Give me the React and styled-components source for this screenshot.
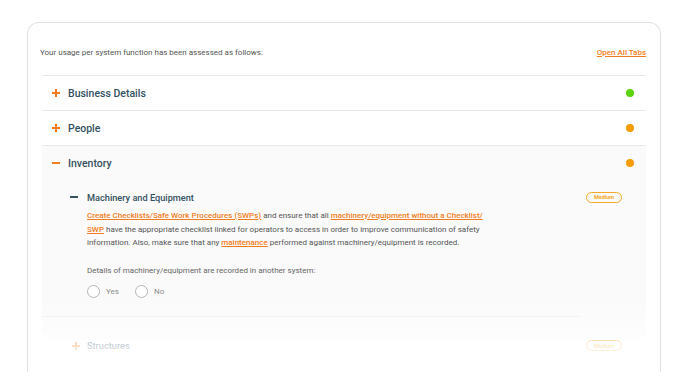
import React from 'react';
import styled, {createGlobalStyle} from 'styled-components';

const GlobalStyle = createGlobalStyle`
    body {
        margin: 0;
        background: #fff;
        font-family: Roboto, "Liberation Sans", sans-serif;
    }
`;

const Page = styled.div`
    padding: 22px 27px 0 27px;
    width: 634px;
`;

// 카드 전체
const Card = styled.div`
    position: relative;
    height: 350px;
    overflow: hidden;
    border: 1px solid #e2e2e2;
    border-bottom: none;
    border-radius: 12px 12px 0 0;
    box-sizing: border-box;
    padding: 24px 14px 0 12px;
`;

const Fade = styled.div`
    position: absolute;
    left: -1px;
    right: -1px;
    bottom: 0;
    height: 75px;
    background: linear-gradient(rgba(255,255,255,0), rgba(255,255,255,0.8) 70%, #fff);
    pointer-events: none;
`;

const Intro = styled.div`
    display: flex;
    justify-content: space-between;
    align-items: center;
    font-size: 8px;
    line-height: 12px;
    color: #555;
    padding-bottom: 16px;
`;

const OpenAll = styled.a`
    color: #f47c20;
    font-weight: 500;
    text-decoration: underline;
    cursor: pointer;
`;

const List = styled.div`
    margin-left: 2px;
`;

const Section = styled.div`
    border-top: 1px solid #e8e8e8;
    background: ${p => p.open ? '#fafafa' : 'transparent'};
    border-radius: 0 0 8px 8px;
`;

const SectionHead = styled.div`
    height: 34px;
    display: flex;
    align-items: center;
    padding: 0 12px 0 10px;
`;

const Toggle = styled.span`
    position: relative;
    width: 8px;
    height: 8px;
    margin-right: ${p => p.gap || 8}px;
    flex-shrink: 0;
    &::before, &::after {
        content: '';
        position: absolute;
        background: ${p => p.color};
    }
    &::before {
        left: 0;
        right: 0;
        top: 3px;
        height: 2px;
    }
    &::after {
        display: ${p => p.open ? 'none' : 'block'};
        top: 0;
        bottom: 0;
        left: 3px;
        width: 2px;
    }
`;

const SectionTitle = styled.div`
    flex: 1;
    font-size: 10.5px;
    font-weight: 500;
    color: #33505f;
`;

const Dot = styled.span`
    width: 8px;
    height: 8px;
    border-radius: 50%;
    background: ${p => p.color};
`;

const Item = styled.div`
    padding: 0 24px 0 28px;
`;

const ItemHead = styled.div`
    display: flex;
    align-items: center;
    height: 16px;
    margin-top: 9px;
`;

const ItemTitle = styled.div`
    flex: 1;
    font-size: 9.2px;
    font-weight: 500;
    color: #33505f;
`;

const Badge = styled.span`
    width: 34px;
    height: 9px;
    border: 1.5px solid #f6a828;
    border-radius: 8px;
    font-size: 5.5px;
    font-weight: 700;
    color: #f6a828;
    display: flex;
    align-items: center;
    justify-content: center;
`;

const ItemBody = styled.div`
    padding-left: 17px;
    width: 404px;
`;

const Text = styled.p`
    margin: 4px 0 0 0;
    font-size: 8px;
    line-height: 13.6px;
    color: #555;
`;

const Link = styled.a`
    color: #f47c20;
    font-weight: 500;
    text-decoration: underline;
`;

const Question = styled.p`
    margin: 14px 0 0 0;
    font-size: 8px;
    line-height: 14px;
    color: #666;
`;

const Options = styled.div`
    display: flex;
    gap: 16px;
    margin-top: 7px;
`;

const Option = styled.label`
    display: flex;
    align-items: center;
    gap: 6px;
    font-size: 8px;
    color: #8a8a8a;
`;

const Radio = styled.span`
    width: 11px;
    height: 11px;
    border: 1px solid #b5b5b5;
    border-radius: 50%;
    background: #fff;
`;

const Divider = styled.div`
    height: 1px;
    background: #ececec;
    margin: 18px 66px 0 0;
`;

const PanelEnd = styled.div`
    height: 22px;
`;

const SubRow = styled.div`
    display: flex;
    align-items: center;
    height: 12px;
    margin-top: 1px;
    padding: 0 24px 0 30px;
`;

const SubTitle = styled.div`
    flex: 1;
    font-size: 9.2px;
    font-weight: 500;
    color: #33505f;
`;

const sections = [
    {title: 'Business Details', color: '#5ad40c'},
    {title: 'People', color: '#f59c00'},
];

const App = () => {
    return (
        <Page>
            <GlobalStyle />
            <Card>
                <Intro>
                    <span>Your usage per system function has been assessed as follows:</span>
                    <OpenAll>Open All Tabs</OpenAll>
                </Intro>
                <List>
                    {sections.map(s => (
                        <Section key={s.title}>
                            <SectionHead>
                                <Toggle color="#f47c20" />
                                <SectionTitle>{s.title}</SectionTitle>
                                <Dot color={s.color} />
                            </SectionHead>
                        </Section>
                    ))}
                    <Section open>
                        <SectionHead>
                            <Toggle color="#f47c20" open />
                            <SectionTitle>Inventory</SectionTitle>
                            <Dot color="#f59c00" />
                        </SectionHead>
                        <Item>
                            <ItemHead>
                                <Toggle color="#33505f" gap={9} open />
                                <ItemTitle>Machinery and Equipment</ItemTitle>
                                <Badge>Medium</Badge>
                            </ItemHead>
                            <ItemBody>
                                <Text>
                                    <Link>Create Checklists/Safe Work Procedures (SWPs)</Link> and ensure that all <Link>machinery/equipment without a Checklist/ SWP</Link> have the appropriate checklist linked for operators to access in order to improve communication of safety information. Also, make sure that any <Link>maintenance</Link> performed against machinery/equipment is recorded.
                                </Text>
                                <Question>Details of machinery/equipment are recorded in another system:</Question>
                                <Options>
                                    <Option><Radio />Yes</Option>
                                    <Option><Radio />No</Option>
                                </Options>
                            </ItemBody>
                        </Item>
                        <Divider />
                        <PanelEnd />
                    </Section>
                    <SubRow>
                        <Toggle color="#f47c20" gap={7} />
                        <SubTitle>Structures</SubTitle>
                        <Badge>Medium</Badge>
                    </SubRow>
                </List>
                <Fade />
            </Card>
        </Page>
    );
};

export default App;
